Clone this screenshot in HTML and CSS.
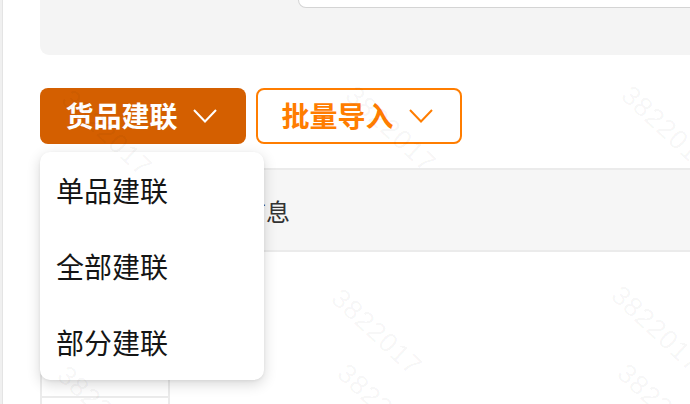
FILE: index.html
```html
<!DOCTYPE html>
<html lang="zh">
<head>
<meta charset="utf-8">
<title>货品建联</title>
<link rel="stylesheet" href="styles.css">
</head>
<body>
<div class="app">
  <div class="rail"></div>
  <main class="content">
    <div class="filter-panel"><div class="search-input"></div></div>
    <div class="toolbar">
      <div class="dropdown-wrap">
        <button class="btn btn-primary">货品建联
          <svg class="chev" viewBox="0 0 24 14" width="24" height="14"><path d="M1 1 L12 12.5 L23 1" fill="none" stroke="currentColor" stroke-width="2"/></svg>
        </button>
        <ul class="menu">
          <li class="menu-item">单品建联</li>
          <li class="menu-item">全部建联</li>
          <li class="menu-item">部分建联</li>
        </ul>
      </div>
      <button class="btn btn-outline">批量导入
        <svg class="chev" viewBox="0 0 24 14" width="24" height="14"><path d="M1 1 L12 12.5 L23 1" fill="none" stroke="currentColor" stroke-width="2"/></svg>
      </button>
    </div>
    <div class="table">
      <div class="thead">
        <div class="th th-first"></div>
        <div class="th">商品信息</div>
      </div>
      <div class="tbody">
        <div class="tr"><div class="td td-first"></div></div>
        <div class="tr"><div class="td td-first"></div></div>
      </div>
    </div>
  </main>
  <div class="watermarks">
    <span class="wm wm1">3822017</span>
    <span class="wm wm2">3822017</span>
    <span class="wm wm3">3822017</span>
    <span class="wm wm4">3822017</span>
    <span class="wm wm5">3822017</span>
    <span class="wm wm6">3822017</span>
    <span class="wm wm7">3822017</span>
    <span class="wm wm8">3822017</span>
  </div>
</div>
</body>
</html>
```
FILE: styles.css
```css
* { box-sizing: border-box; }
html, body {
  margin: 0;
  padding: 0;
  width: 690px;
  height: 404px;
  overflow: hidden;
  background: #fff;
  font-family: "Noto Sans CJK SC", "Noto Sans", sans-serif;
}
.app {
  position: relative;
  display: flex;
  width: 690px;
  height: 404px;
  overflow: hidden;
}
.rail {
  flex: 0 0 3px;
  background: #f0f0f0;
  border-right: 1px solid #e4e4e4;
}
.content {
  flex: 1;
  padding-left: 37px;
  min-width: 0;
}
.filter-panel {
  height: 55px;
  margin-right: -20px;
  background: #f4f4f4;
  border-radius: 0 0 0 9px;
}
.search-input {
  margin-left: 258px;
  height: 8px;
  background: #fff;
  border: 1px solid #d4d4d4;
  border-top: none;
  border-radius: 0 0 0 9px;
}
.toolbar {
  display: flex;
  gap: 10px;
  margin-top: 33px;
}
.dropdown-wrap {
  position: relative;
}
.btn {
  width: 206px;
  height: 56px;
  border-radius: 8px;
  font-family: inherit;
  font-size: 28px;
  font-weight: 700;
  display: flex;
  align-items: center;
  justify-content: center;
  gap: 15px;
  padding: 0 4px 2px 0;
  cursor: pointer;
}
.btn-primary {
  background: #d45f00;
  color: #fff;
  border: none;
}
.btn-outline {
  background: #fff;
  color: #ff7d00;
  border: 2px solid #ff7d00;
}
.chev { display: block; margin-top: 2px; }
.menu {
  position: absolute;
  top: calc(100% + 8px);
  left: 0;
  z-index: 5;
  width: 224px;
  margin: 0;
  padding: 0;
  list-style: none;
  background: #fff;
  border-radius: 10px;
  box-shadow: 0 4px 14px rgba(0, 0, 0, 0.16), 0 1px 3px rgba(0, 0, 0, 0.06);
}
.menu-item {
  height: 76px;
  line-height: 76px;
  padding-left: 16px;
  font-size: 28px;
  color: #151515;
}
.table {
  margin-top: 24px;
  margin-right: -20px;
}
.thead {
  display: flex;
  align-items: center;
  height: 84px;
  background: #f6f6f6;
  border-top: 2px solid #ebebeb;
  border-bottom: 2px solid #ebebeb;
}
.th {
  font-size: 24px;
  color: #333;
  padding-left: 24px;
}
.th-first {
  width: 130px;
  padding: 0;
}
.tr {
  display: flex;
}
.td-first {
  width: 130px;
  height: 146px;
  border-left: 2px solid #ebebeb;
  border-right: 2px solid #ebebeb;
  border-bottom: 2px solid #ebebeb;
}
.watermarks {
  position: absolute;
  inset: 0;
  pointer-events: none;
  z-index: 10;
}
.wm {
  position: absolute;
  font-family: "Liberation Sans", sans-serif;
  font-size: 27px;
  color: rgba(0, 0, 0, 0.045);
  transform: rotate(43deg);
  transform-origin: 0 0;
  white-space: nowrap;
  letter-spacing: 1px;
}
.wm1 { left: 76px; top: 84px; }
.wm2 { left: 360px; top: 80px; }
.wm3 { left: 636px; top: 80px; }
.wm4 { left: 346px; top: 283px; }
.wm5 { left: 626px; top: 280px; }
.wm6 { left: 72px; top: 360px; }
.wm7 { left: 352px; top: 358px; }
.wm8 { left: 632px; top: 358px; }
```
